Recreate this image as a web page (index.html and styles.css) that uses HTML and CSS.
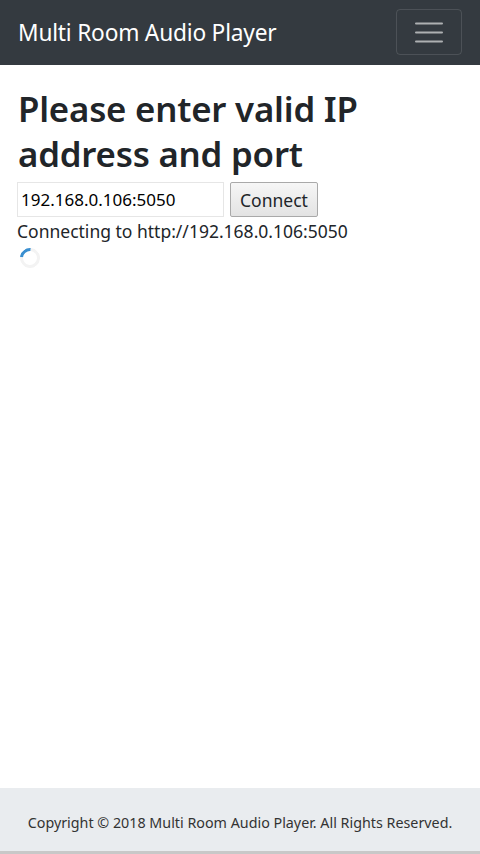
FILE: index.html
```html
<!DOCTYPE html>
<html>
<head>
<meta charset="utf-8">
<link rel="stylesheet" href="styles.css">
</head>
<body>
<div class="page">
  <nav class="navbar">
    <span class="brand">Multi Room Audio Player</span>
    <button class="toggler" aria-label="menu">
      <svg width="30" height="30" viewBox="0 0 30 30"><path d="M2 6.5h26M2 15.5h26M2 24.5h26" stroke="rgba(255,255,255,0.6)" stroke-width="2" stroke-linecap="round"/></svg>
    </button>
  </nav>
  <main class="content">
    <h1 class="title">Please enter valid IP address and port</h1>
    <div class="form-row">
      <input class="ip-input" type="text" value="192.168.0.106:5050">
      <button class="connect">Connect</button>
    </div>
    <div class="status">Connecting to http://192.168.0.106:5050</div>
    <div class="spinner"></div>
  </main>
  <footer class="footer">Copyright © 2018 Multi Room Audio Player. All Rights Reserved.</footer>
</div>
</body>
</html>
```
FILE: styles.css
```css
html, body { margin: 0; padding: 0; }
body {
  font-family: "Noto Sans", "Open Sans", sans-serif;
  color: #212529;
  background: #fff;
}
.page {
  display: flex;
  flex-direction: column;
  height: 854px;
}
.navbar {
  background: #343a40;
  height: 65px;
  box-sizing: border-box;
  display: flex;
  align-items: center;
  justify-content: space-between;
  padding: 0 18px 0 18px;
}
.brand {
  color: #fff;
  font-size: 22.7px;
  letter-spacing: -0.2px;
}
.toggler {
  width: 66px;
  height: 46px;
  margin-top: -2px;
  background: transparent;
  border: 1px solid rgba(255,255,255,0.12);
  border-radius: 4px;
  display: flex;
  align-items: center;
  justify-content: center;
  padding: 0;
}
.content {
  flex: 1;
  padding: 0 17px;
}
.title {
  font-size: 34.8px;
  font-weight: 600;
  line-height: 45px;
  margin: 21px 0 6px 1px;
  letter-spacing: -0.2px;
}
.form-row {
  display: flex;
  gap: 6px;
  align-items: stretch;
}
.ip-input {
  width: 207px;
  height: 35px;
  box-sizing: border-box;
  border: 1px solid #e6e6e6;
  font-family: inherit;
  font-size: 17px;
  padding: 0 3px;
  color: #000;
}
.connect {
  height: 35px;
  box-sizing: border-box;
  font-family: inherit;
  font-size: 17.5px;
  padding: 0 9px;
  background: linear-gradient(#f6f6f6, #e3e3e3);
  border: 1px solid #a9a9a9;
  border-radius: 2px;
  color: #212529;
}
.status {
  font-size: 17.5px;
  margin-top: 2px;
  line-height: 24px;
}
.spinner {
  width: 14px;
  height: 14px;
  margin: 5px 0 0 3px;
  border: 3px solid #f3f3f3;
  border-top-color: #3a8fd0;
  border-radius: 50%;
  transform: rotate(-40deg);
}
.footer {
  background: #e9ecef;
  height: 66px;
  display: flex;
  align-items: center;
  justify-content: center;
  padding-top: 6px;
  font-size: 14.3px;
  color: #333;
  border-bottom: 3px solid #c8c8c8;
  box-sizing: border-box;
}
```
